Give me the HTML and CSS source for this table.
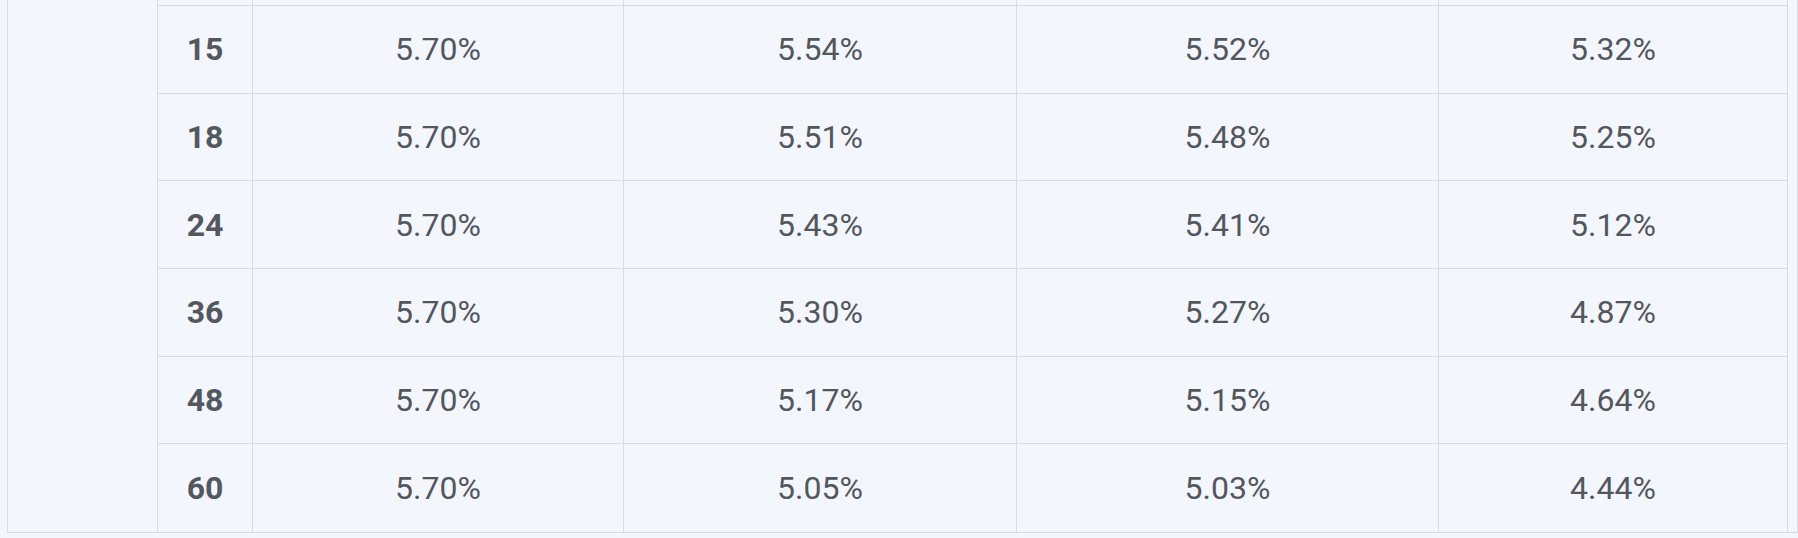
FILE: index.html
```html
<!DOCTYPE html>
<html lang="en">
<head>
<meta charset="utf-8">
<title>Rates</title>
<link rel="stylesheet" href="styles.css">
</head>
<body>
<div class="panel">
  <div class="grid">
    <div class="cell side"></div>
    <div class="cell top"></div><div class="cell top"></div><div class="cell top"></div><div class="cell top"></div><div class="cell top"></div>

    <div class="cell term">15</div><div class="cell val">5.70%</div><div class="cell val">5.54%</div><div class="cell val">5.52%</div><div class="cell val">5.32%</div>
    <div class="cell term">18</div><div class="cell val">5.70%</div><div class="cell val">5.51%</div><div class="cell val">5.48%</div><div class="cell val">5.25%</div>
    <div class="cell term">24</div><div class="cell val">5.70%</div><div class="cell val">5.43%</div><div class="cell val">5.41%</div><div class="cell val">5.12%</div>
    <div class="cell term">36</div><div class="cell val">5.70%</div><div class="cell val">5.30%</div><div class="cell val">5.27%</div><div class="cell val">4.87%</div>
    <div class="cell term">48</div><div class="cell val">5.70%</div><div class="cell val">5.17%</div><div class="cell val">5.15%</div><div class="cell val">4.64%</div>
    <div class="cell term last">60</div><div class="cell val last">5.70%</div><div class="cell val last">5.05%</div><div class="cell val last">5.03%</div><div class="cell val last">4.44%</div>
  </div>
</div>
</body>
</html>
```
FILE: styles.css
```css
html, body {
  margin: 0;
  padding: 0;
  background: #f3f6fc;
}

body {
  width: 1798px;
  height: 538px;
  overflow: hidden;
  font-family: Roboto, "Liberation Sans", sans-serif;
}

.panel {
  margin-left: 7px;
  width: 1789px;
  border-left: 1px solid #d6dce6;
  border-right: 1px solid #d6dce6;
  border-bottom: 1px solid #d6dce6;
}

.grid {
  display: grid;
  width: 1780px;
  grid-template-columns: 150px 95px 371px 393px 422px 349px;
  grid-template-rows: 6px repeat(6, 87.67px);
}

.cell {
  box-sizing: border-box;
  border-right: 1px solid #d6dce6;
  border-bottom: 1px solid #d6dce6;
  display: flex;
  align-items: center;
  justify-content: center;
  font-size: 32px;
  color: #53575d;
}

.cell.side {
  grid-row: 1 / -1;
  border-bottom: none;
}

.cell.last {
  border-bottom: none;
}

.cell.term {
  font-weight: 700;
  color: #54585e;
}

.cell.val {
  font-weight: 400;
}
```
